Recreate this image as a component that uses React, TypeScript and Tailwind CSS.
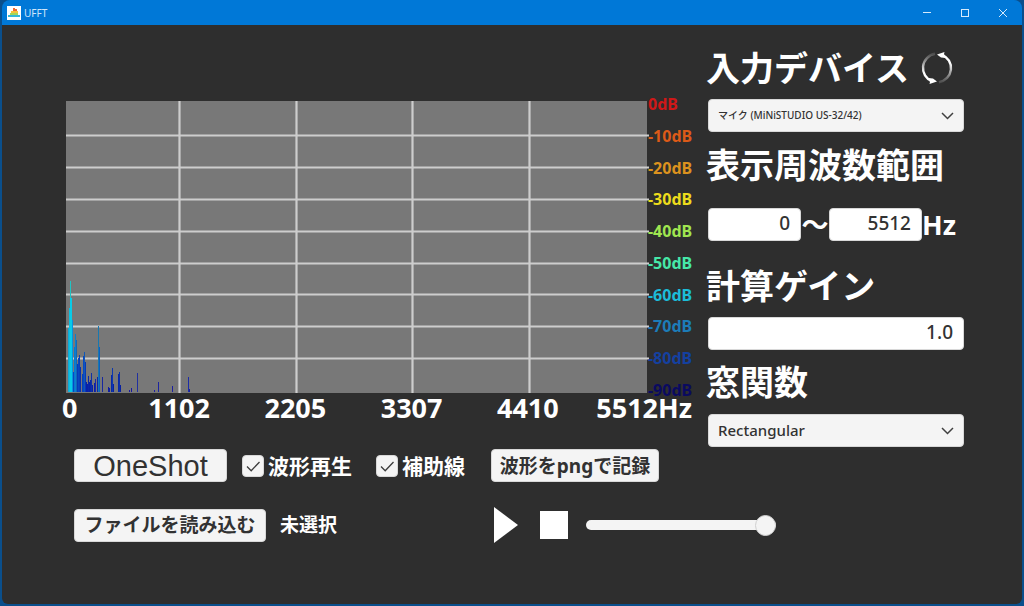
import { useState } from "react";
import type { ReactNode } from "react";

const DB_LABELS = [
  { text: "0dB", color: "text-[#d01818]" },
  { text: "-10dB", color: "text-[#dd5a18]" },
  { text: "-20dB", color: "text-[#dc921e]" },
  { text: "-30dB", color: "text-[#eddc1c]" },
  { text: "-40dB", color: "text-[#a0e650]" },
  { text: "-50dB", color: "text-[#46e8a8]" },
  { text: "-60dB", color: "text-[#1cbcd8]" },
  { text: "-70dB", color: "text-[#1c7cb8]" },
  { text: "-80dB", color: "text-[#1440a0]" },
  { text: "-90dB", color: "text-[#0a0a60]" },
];

const GRID_Y = [34, 66, 98, 130, 162, 193, 225, 257];
const GRID_X = [113, 230, 346, 463];

// [x, width, height, color]
const BARS: [number, number, number, string][] = [
  [2, 2, 64, "#10a8d8"],
  [3, 2, 84, "#0cc0e0"],
  [4, 1, 111, "#20c4c4"],
  [4, 2, 94, "#08cce8"],
  [6, 1, 72, "#0894e0"],
  [7, 1, 20, "#0848c0"],
  [8, 1, 45, "#0878d0"],
  [9, 1, 58, "#0c80cc"],
  [10, 1, 52, "#1068b8"],
  [11, 1, 28, "#0838b8"],
  [12, 1, 34, "#0848c0"],
  [13, 1, 37, "#0840b8"],
  [14, 1, 25, "#0830b0"],
  [16, 1, 18, "#0840b8"],
  [17, 1, 36, "#0848c0"],
  [18, 1, 40, "#1058b8"],
  [19, 1, 30, "#0838b8"],
  [20, 1, 10, "#0820a8"],
  [21, 1, 8, "#0820a8"],
  [22, 1, 16, "#0828a8"],
  [23, 1, 10, "#0820a8"],
  [24, 1, 12, "#0828a8"],
  [25, 1, 19, "#1030a8"],
  [26, 1, 7, "#0820a8"],
  [28, 1, 9, "#0820a8"],
  [29, 1, 13, "#1828a8"],
  [31, 1, 15, "#1028a8"],
  [32, 1, 44, "#0c70c8"],
  [32, 1, 66, "#1878b0"],
  [33, 1, 45, "#0c60c0"],
  [36, 1, 15, "#1828a0"],
  [42, 1, 5, "#1020a0"],
  [43, 1, 4, "#1020a0"],
  [45, 1, 17, "#0828a8"],
  [46, 1, 24, "#0c38b0"],
  [47, 1, 8, "#0820a0"],
  [52, 1, 18, "#0828a8"],
  [53, 1, 20, "#0c30a8"],
  [54, 1, 7, "#0820a0"],
  [63, 1, 2, "#1818a0"],
  [65, 1, 4, "#1818a0"],
  [71, 1, 19, "#2030a0"],
  [88, 1, 2, "#2020a0"],
  [92, 1, 10, "#1c24a0"],
  [106, 1, 6, "#1c20a0"],
  [122, 1, 15, "#1c2ca8"],
  [123, 1, 3, "#1820a0"],
];

const BUTTON =
  "flex h-[33px] items-center justify-center whitespace-nowrap rounded-[4px] border border-[#d8d8d8] bg-[#f4f4f4] text-[#323232]";
const FIELD =
  "h-[33px] min-w-0 rounded-[4px] border border-[#d8d8d8] bg-white px-[10px] pb-[3px] text-right text-[19px] leading-[24px] font-medium text-[#323232]";
const HEADING = "-ml-[2px] block whitespace-nowrap text-[34px] leading-[40px] font-bold";

function TitleBar() {
  return (
    <header className="flex h-[25px] shrink-0 items-center rounded-t-lg bg-[#0078d7]">
      <svg className="ml-[5px] h-[14px] w-[14px]" viewBox="0 0 14 14">
        <rect width="14" height="14" fill="#fff" />
        <path d="M1 11V9h3V8h6v1h3v2z" fill="#36b8d8" />
        <path d="M3 9V7h8v2z" fill="#a5d65a" />
        <path d="M4 7V5h2V4h3v1h2v2z" fill="#f4c43c" />
        <path d="M6 4V2h2v1h2v2H6z" fill="#ee6a35" />
      </svg>
      <h1 className="ml-[3px] text-[10px] leading-[14px] text-[#cfe6fa]">UFFT</h1>
      <div className="ml-auto flex h-full text-[#d6eafb]">
        <button aria-label="最小化" className="flex w-[38px] items-center justify-center">
          <svg width="10" height="10" viewBox="0 0 10 10" stroke="currentColor">
            <path d="M1 4.5h8" />
          </svg>
        </button>
        <button aria-label="最大化" className="flex w-[38px] items-center justify-center">
          <svg width="10" height="10" viewBox="0 0 10 10" fill="none" stroke="currentColor">
            <rect x="1.5" y="1.5" width="7" height="7" />
          </svg>
        </button>
        <button aria-label="閉じる" className="flex w-[38px] items-center justify-center">
          <svg width="10" height="10" viewBox="0 0 10 10" stroke="currentColor">
            <path d="M1 1l8 8M9 1l-8 8" />
          </svg>
        </button>
      </div>
    </header>
  );
}

function Spectrum({ guides }: { guides: boolean }) {
  return (
    <div>
      <div className="flex gap-px">
        <svg
          className="mt-1 h-[292px] min-w-0 flex-1 overflow-visible"
          viewBox="0 0 581 292"
          preserveAspectRatio="none"
        >
          <rect width="581" height="292" fill="#787878" />
          {guides && (
            <g stroke="#cdcdcd" strokeWidth="2.2">
              {GRID_X.map((x) => (
                <path key={x} d={`M${x + 0.5} 0V292`} />
              ))}
              {GRID_Y.map((y) => (
                <path key={y} d={`M0 ${y + 0.5}H583`} />
              ))}
            </g>
          )}
          {BARS.map(([x, w, h, color], i) => (
            <rect key={i} x={x} y={291 - h} width={w} height={h} fill={color} />
          ))}
        </svg>
        <ul className="flex h-[300px] w-11 flex-col justify-between text-[16px] leading-[14px] font-bold">
          {DB_LABELS.map((l) => (
            <li key={l.text} className={l.color}>
              {l.text}
            </li>
          ))}
        </ul>
      </div>
      <div className="grid grid-cols-[55px_1fr_1fr_1fr_1fr_106px] text-center text-[27px] leading-[22px] font-bold">
        <span className="-ml-1 text-left">0</span>
        <span>1102</span>
        <span>2205</span>
        <span>3307</span>
        <span>4410</span>
        <span className="text-right">5512Hz</span>
      </div>
    </div>
  );
}

function Select({ id, className, children }: { id: string; className: string; children: ReactNode }) {
  return (
    <div className="relative">
      <select
        id={id}
        className={`block h-[33px] w-full appearance-none rounded-[4px] border border-[#d8d8d8] bg-[#f4f4f4] px-[9px] font-medium text-[#323232] ${className}`}
      >
        {children}
      </select>
      <svg
        className="pointer-events-none absolute top-3 right-[10px] h-[10px] w-[13px]"
        viewBox="0 0 13 10"
        fill="none"
        stroke="#404040"
        strokeWidth="1.5"
      >
        <path d="M1 2l5.5 5.5L12 2" />
      </svg>
    </div>
  );
}

function Toggle({ label, checked, onChange }: { label: string; checked: boolean; onChange: (v: boolean) => void }) {
  return (
    <label className="flex items-center gap-1 whitespace-nowrap text-[21px] leading-[24px] font-bold">
      <span className="grid">
        <input
          type="checkbox"
          checked={checked}
          onChange={(e) => onChange(e.target.checked)}
          className="col-start-1 row-start-1 h-[22px] w-[22px] appearance-none rounded-[4px] border border-[#d8d8d8] bg-[#f4f4f4]"
        />
        {checked && (
          <svg
            className="pointer-events-none col-start-1 row-start-1 h-[22px] w-[22px]"
            viewBox="0 0 22 22"
            fill="none"
            stroke="#3c3c3c"
            strokeWidth="1.3"
          >
            <path d="M5 11.5l4.2 4.2L17.5 7" />
          </svg>
        )}
      </span>
      {label}
    </label>
  );
}

function RefreshIcon() {
  return (
    <svg className="h-8 w-8" viewBox="0 0 32 32" fill="none" strokeWidth="2.4">
      <defs>
        <linearGradient id="fadeRight" x1="0" y1="0" x2="0" y2="1">
          <stop offset="0.3" stopColor="#fff" />
          <stop offset="1" stopColor="#fff" stopOpacity="0.15" />
        </linearGradient>
        <linearGradient id="fadeLeft" x1="0" y1="1" x2="0" y2="0">
          <stop offset="0.3" stopColor="#fff" />
          <stop offset="1" stopColor="#fff" stopOpacity="0.15" />
        </linearGradient>
      </defs>
      <path d="M21 2.8A14.3 14.3 0 0 1 18 30.2" stroke="url(#fadeRight)" />
      <path d="M11 29.2A14.3 14.3 0 0 1 14 1.8" stroke="url(#fadeLeft)" />
      <path d="M16 2.5L23.500 0l-.5 2 2 4-5-.6z" fill="#fff" />
      <path d="M16 29.500L8.500 32l.5-2-2-4 5 .6z" fill="#fff" />
    </svg>
  );
}

export default function App() {
  const [playWave, setPlayWave] = useState(true);
  const [guides, setGuides] = useState(true);

  return (
    <div className="flex min-h-screen flex-col bg-[#0a4f8c] px-[2px] pb-[2px] font-['Noto_Sans','Noto_Sans_CJK_JP',sans-serif] text-white">
      <TitleBar />
      <main className="flex-1 rounded-b-md bg-[#2e2e2e] pr-[58px] pl-16">
        <div className="flex items-start gap-4">
          <section className="min-w-0 flex-1 pt-[72px]">
            <Spectrum guides={guides} />
          </section>

          <section className="w-64 shrink-0 pt-[23px]">
            <div className="flex items-center gap-3">
              <label htmlFor="device" className={HEADING}>入力デバイス</label>
              <button aria-label="デバイスを更新">
                <RefreshIcon />
              </button>
            </div>
            <div className="mt-[11px]">
              <Select id="device" className="text-[10px]">
                <option>マイク (MiNiSTUDIO US-32/42)</option>
              </Select>
            </div>

            <h2 className={`mt-[13px] ${HEADING}`}>表示周波数範囲</h2>
            <div className="mt-[23px] flex items-center text-[27px] leading-[32px] font-bold">
              <input aria-label="最低周波数" defaultValue="0" className={`flex-1 ${FIELD}`} />
              <span className="w-7 text-center">〜</span>
              <input aria-label="最高周波数" defaultValue="5512" className={`flex-1 ${FIELD}`} />
              <span className="w-[42px]">Hz</span>
            </div>

            <label htmlFor="gain" className={`mt-[25px] ${HEADING}`}>計算ゲイン</label>
            <input id="gain" defaultValue="1.0" className={`mt-[11px] w-full ${FIELD}`} />

            <label htmlFor="window" className={`mt-3 ${HEADING}`}>窓関数</label>
            <div className="mt-3">
              <Select id="window" className="text-[15px]">
                <option>Rectangular</option>
                <option>Hanning</option>
                <option>Hamming</option>
                <option>Blackman</option>
              </Select>
            </div>
          </section>
        </div>

        <div className="mt-[2px] grid grid-cols-[417px_1fr] gap-y-[25px] pb-8 pl-2">
          <div className="flex items-center">
            <button className={`w-[153px] font-['Liberation_Sans',Arial,sans-serif] text-[29px] leading-[32px] ${BUTTON}`}>
              OneShot
            </button>
            <div className="ml-[15px] flex gap-6">
              <Toggle label="波形再生" checked={playWave} onChange={setPlayWave} />
              <Toggle label="補助線" checked={guides} onChange={setGuides} />
            </div>
          </div>
          <button className={`w-[168px] text-[19px] leading-[24px] font-bold ${BUTTON}`}>波形をpngで記録</button>

          <div className="flex items-center gap-[14px]">
            <button className={`w-[192px] text-[19px] leading-[24px] font-bold ${BUTTON}`}>ファイルを読み込む</button>
            <span className="text-[19px] leading-[24px] font-bold">未選択</span>
          </div>
          <div className="flex items-center pl-[3px]">
            <button aria-label="再生">
              <svg className="h-9 w-6" viewBox="0 0 24 36" fill="#fff">
                <path d="M0 0L24 18L0 36z" />
              </svg>
            </button>
            <button aria-label="停止" className="ml-[22px] h-7 w-7 bg-white" />
            <input
              type="range"
              aria-label="再生位置"
              defaultValue={100}
              className="ml-[18px] h-[10px] w-[190px] appearance-none rounded-full bg-[#f4f4f4] [&::-webkit-slider-thumb]:h-[21px] [&::-webkit-slider-thumb]:w-[21px] [&::-webkit-slider-thumb]:appearance-none [&::-webkit-slider-thumb]:rounded-full [&::-webkit-slider-thumb]:border [&::-webkit-slider-thumb]:border-[#d0d0d0] [&::-webkit-slider-thumb]:bg-[#f4f4f4]"
            />
          </div>
        </div>
      </main>
    </div>
  );
}
